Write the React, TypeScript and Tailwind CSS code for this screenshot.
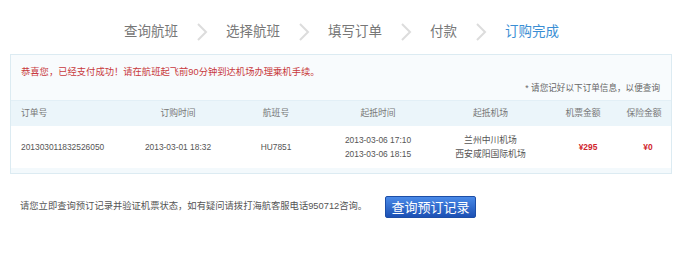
const steps = ["查询航班", "选择航班", "填写订单", "付款", "订购完成"];

const Chevron = () => (
  <svg width="12" height="20" viewBox="0 0 12 20" className="mx-[18px]">
    <polyline points="2,2 10,10 2,18" fill="none" stroke="#dcdcdc" strokeWidth="2" />
  </svg>
);

const cols = "grid grid-cols-[119px_96px_100px_104px_121px_64px_58px] items-center";

const App = () => {
  return (
    <div
      className="w-[685px] h-[262px] bg-white text-[#666]"
      style={{ fontFamily: '"Liberation Sans", "Noto Sans CJK SC", sans-serif' }}
    >
      <div className="flex items-center h-[54px] pt-[10px] pl-[124px]">
        {steps.map((s, i) => (
          <div key={s} className="flex items-center">
            <span
              className={
                i === steps.length - 1
                  ? "text-[13.5px] text-[#3a8ed4]"
                  : "text-[13.5px] text-[#777]"
              }
            >
              {s}
            </span>
            {i < steps.length - 1 && <Chevron />}
          </div>
        ))}
      </div>

      <div className="ml-[10px] w-[662px] border border-[#dcebf2] bg-[#f3f9fc]">
        <div className="h-[45px] bg-[#f8fbfd] pt-[10px] px-[10px]">
          <p className="text-[9.3px] text-[#c8393c] leading-[14px]">
            恭喜您，已经支付成功！请在航班起飞前90分钟到达机场办理乘机手续。
          </p>
          <p className="text-[8.6px] text-[#666] leading-[14px] mt-[2px] text-right pr-[1px]">
            * 请您记好以下订单信息，以便查询
          </p>
        </div>

        <div className={`${cols} h-[26px] bg-[#ebf5fa] border-t border-[#e2eff6] text-[8.8px] text-[#777] text-center`}>
          <div className="text-left pl-[10px]">订单号</div>
          <div>订购时间</div>
          <div>航班号</div>
          <div>起抵时间</div>
          <div>起抵机场</div>
          <div>机票金额</div>
          <div>保险金额</div>
        </div>

        <div className={`${cols} h-[42px] bg-white text-[8.4px] text-[#555] text-center`}>
          <div className="text-left pl-[10px]">201303011832526050</div>
          <div>2013-03-01 18:32</div>
          <div>HU7851</div>
          <div className="leading-[14px]">
            <div>2013-03-06 17:10</div>
            <div>2013-03-06 18:15</div>
          </div>
          <div className="leading-[14px] text-[8.8px]">
            <div>兰州中川机场</div>
            <div>西安咸阳国际机场</div>
          </div>
          <div className="font-bold text-[#d0232b] pl-[10px]">¥295</div>
          <div className="font-bold text-[#d0232b] pl-[8px]">¥0</div>
        </div>

        <div className="h-[5px]" />
      </div>

      <div className="flex items-center mt-[22px] pl-[20px]">
        <span className="text-[9.3px] text-[#555]">
          请您立即查询预订记录并验证机票状态，如有疑问请拨打海航客服电话950712咨询。
        </span>
        <button className="ml-[18px] w-[91px] h-[22px] rounded-[2px] border border-[#1d4ea6] bg-gradient-to-b from-[#4a8ae8] to-[#1c50b4] text-white text-[13px] leading-none">
          查询预订记录
        </button>
      </div>
    </div>
  );
};

export default App;
